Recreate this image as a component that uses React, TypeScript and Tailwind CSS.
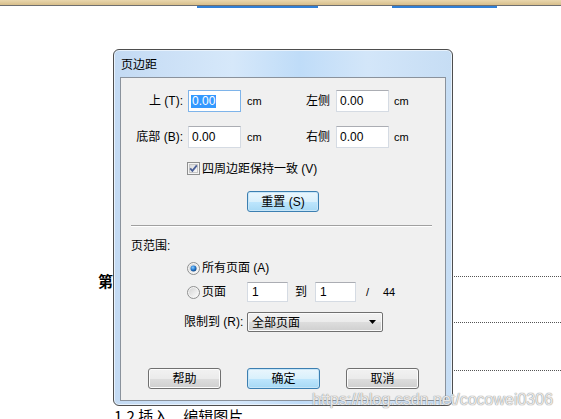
import React from "react";

const Field = ({ w, children }: { w: string; children?: React.ReactNode }) => (
  <div className={`${w} h-[22px] bg-white border border-[#d5dbe3] border-t-[#abadb3] flex items-center pl-[3px] text-[12px]`}>
    {children}
  </div>
);

const WinButton = ({ label, primary }: { label: string; primary?: boolean }) => (
  <div
    className={
      primary
        ? "w-[73px] h-[21px] rounded-[3px] border border-[#3c7fb1] bg-[linear-gradient(#eaf6fd_0%,#d9f0fc_50%,#bee6fd_51%,#a7d9f5_100%)] shadow-[inset_0_0_0_1px_#c8e6f8] flex items-center justify-center text-[12px] text-black"
        : "w-[73px] h-[21px] rounded-[3px] border border-[#707070] bg-[linear-gradient(#f2f2f2_0%,#ebebeb_50%,#dddddd_51%,#cfcfcf_100%)] shadow-[inset_0_0_0_1px_#fcfcfc] flex items-center justify-center text-[12px] text-black"
    }
  >
    {label}
  </div>
);

const Radio = ({ on }: { on?: boolean }) => (
  <svg width="13" height="13" viewBox="0 0 13 13">
    <defs>
      <linearGradient id="rg" x1="0" y1="0" x2="1" y2="1">
        <stop offset="0" stopColor="#d4d4d4" />
        <stop offset="1" stopColor="#fbfbfb" />
      </linearGradient>
      <radialGradient id="rd" cx="0.4" cy="0.35" r="0.7">
        <stop offset="0" stopColor="#8fd0ff" />
        <stop offset="0.5" stopColor="#2a7fd4" />
        <stop offset="1" stopColor="#0c3f7c" />
      </radialGradient>
    </defs>
    <circle cx="6.5" cy="6.5" r="6" fill="#f4f4f4" stroke="#8e8f8f" />
    <circle cx="6.5" cy="6.5" r="4.5" fill="url(#rg)" />
    {on && <circle cx="6.5" cy="6.5" r="3" fill="url(#rd)" />}
  </svg>
);

const CheckBox = () => (
  <svg width="13" height="13" viewBox="0 0 13 13">
    <defs>
      <linearGradient id="cg" x1="0" y1="0" x2="1" y2="1">
        <stop offset="0" stopColor="#d8d8d8" />
        <stop offset="1" stopColor="#fbfbfb" />
      </linearGradient>
    </defs>
    <rect x="0.5" y="0.5" width="12" height="12" fill="#f4f4f4" stroke="#8e8f8f" />
    <rect x="2.5" y="2.5" width="8" height="8" fill="url(#cg)" stroke="#c6c6c6" />
    <path d="M3.2 6.3 L5.4 8.8 L9.8 3.4" fill="none" stroke="#4a5f97" strokeWidth="1.8" />
  </svg>
);

export default function App() {
  return (
    <div className="relative w-[561px] h-[419px] overflow-hidden bg-white font-['Liberation_Sans','Noto_Sans_CJK_SC',sans-serif]">
      {/* top strip of the window behind */}
      <div className="h-[5px] bg-[linear-gradient(#e9d7ae,#d8bf8c)]" />
      <div className="h-[1px] bg-[#6f6f6f]" />
      <div className="flex h-[2px]">
        <div className="ml-[197px] w-[121px] bg-[#2f80d8]" />
        <div className="ml-[74px] w-[105px] bg-[#2f80d8]" />
      </div>

      {/* document behind the dialog */}
      <div className="absolute left-[98px] top-[270px] text-[15px] font-bold text-black font-['Noto_Sans_CJK_SC',sans-serif]">第一章</div>
      <div className="absolute left-[452px] right-0 top-[276px] border-t border-dotted border-[#555]" />
      <div className="absolute left-[452px] right-0 top-[322px] border-t border-dotted border-[#555]" />
      <div className="absolute left-[452px] right-0 top-[370px] border-t border-dotted border-[#555]" />
      <div className="absolute left-[114px] right-0 top-[405px] flex items-center gap-[6px] text-[15px] text-black font-['Noto_Sans_CJK_SC',sans-serif]">
        <span>1.2 插入、编辑图片</span>
        <div className="flex-1 border-t border-dotted border-[#555] mt-[12px]" />
      </div>

      {/* dialog */}
      <div className="absolute left-[113px] top-[49px] w-[340px] h-[357px] rounded-[6px] border border-[#4e4e4e] bg-[linear-gradient(90deg,#c3daf3_0%,#d6e8fa_35%,#bfdcf8_55%,#d3e6f9_75%,#c6ddf4_100%)] shadow-[inset_0_0_0_1px_#e8f2fc] px-[6px] pb-[4px] flex flex-col">
        <div className="h-[27px] flex items-center pl-[1px] text-[12px] text-black font-['Noto_Sans_CJK_SC',sans-serif]">页边距</div>
        <div className="flex-1 border border-[#8a929c] bg-[#f0f0f0] text-[12px] text-black">
          {/* row 1 */}
          <div className="mt-[12px] flex items-center h-[22px]">
            <div className="w-[62px] text-right">上 (T):</div>
            <div className="ml-[5px]">
              <div className="w-[53px] h-[22px] bg-white border border-[#7eb4ea] flex items-center pl-[2px]">
                <span className="bg-[#3399ff] text-white leading-[13px] px-[1px]">0.00</span>
              </div>
            </div>
            <div className="ml-[6px] w-[59px] text-[11px]">cm</div>
            <div className="w-[30px]">左侧</div>
            <Field w="w-[53px]">0.00</Field>
            <div className="ml-[5px] text-[11px]">cm</div>
          </div>
          {/* row 2 */}
          <div className="mt-[14px] flex items-center h-[22px]">
            <div className="w-[62px] text-right">底部 (B):</div>
            <div className="ml-[5px]">
              <Field w="w-[53px]">0.00</Field>
            </div>
            <div className="ml-[6px] w-[59px] text-[11px]">cm</div>
            <div className="w-[30px]">右侧</div>
            <Field w="w-[53px]">0.00</Field>
            <div className="ml-[5px] text-[11px]">cm</div>
          </div>
          {/* checkbox */}
          <div className="mt-[14px] ml-[66px] flex items-center h-[13px] gap-[2px]">
            <CheckBox />
            <span>四周边距保持一致 (V)</span>
          </div>
          {/* reset */}
          <div className="mt-[16px] ml-[126px]">
            <div className="w-[72px] h-[21px] rounded-[3px] border border-[#3c7fb1] bg-[linear-gradient(#eaf6fd_0%,#d9f0fc_50%,#bee6fd_51%,#a7d9f5_100%)] shadow-[inset_0_0_0_1px_#c8e6f8] flex items-center justify-center">
              重置 (S)
            </div>
          </div>
          {/* separator */}
          <div className="mt-[13px] ml-[10px] w-[301px] border-t border-[#a0a0a0] border-b border-b-white" />
          {/* page range */}
          <div className="mt-[12px] ml-[10px] h-[14px] flex items-center">页范围:</div>
          <div className="mt-[8px] ml-[66px] h-[14px] flex items-center gap-[2px]">
            <Radio on />
            <span>所有页面 (A)</span>
          </div>
          <div className="mt-[7px] ml-[66px] h-[20px] flex items-center">
            <Radio />
            <span className="ml-[2px] w-[45px]">页面</span>
            <div className="w-[41px] h-[20px] bg-white border border-[#d5dbe3] border-t-[#abadb3] flex items-center pl-[4px]">1</div>
            <span className="ml-[7px] w-[13px]">到</span>
            <div className="ml-[7px] w-[41px] h-[20px] bg-white border border-[#d5dbe3] border-t-[#abadb3] flex items-center pl-[4px]">1</div>
            <span className="ml-[10px] w-[17px] text-[11px]">/</span>
            <span className="text-[11px]">44</span>
          </div>
          <div className="mt-[10px] ml-[63px] h-[20px] flex items-center">
            <span className="w-[63px]">限制到 (R):</span>
            <div className="w-[136px] h-[20px] rounded-[2px] border border-[#707070] bg-[linear-gradient(#f2f2f2_0%,#ebebeb_50%,#dddddd_51%,#cfcfcf_100%)] shadow-[inset_0_0_0_1px_#fafafa] flex items-center pl-[4px] pr-[6px]">
              <span className="flex-1 font-['Noto_Sans_CJK_SC',sans-serif]">全部页面</span>
              <svg width="7" height="4" viewBox="0 0 7 4">
                <path d="M0 0 H7 L3.5 4 Z" fill="#000" />
              </svg>
            </div>
          </div>
          {/* buttons */}
          <div className="mt-[36px] ml-[27px] flex gap-[26px]">
            <WinButton label="帮助" />
            <WinButton label="确定" primary />
            <WinButton label="取消" />
          </div>
        </div>
      </div>

      {/* watermark */}
      <div className="absolute left-[312px] top-[388px] text-[16px] text-white/80 [text-shadow:0_0_1px_#8c8c8c,0_0_1px_#8c8c8c] font-['Liberation_Sans',sans-serif]">
        https://blog.csdn.net/cocowei0306
      </div>
    </div>
  );
}
